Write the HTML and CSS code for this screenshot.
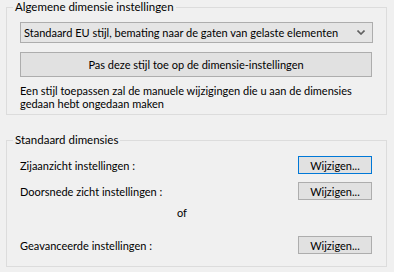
FILE: index.html
```html
<!DOCTYPE html>
<html lang="nl">
<head>
    <meta charset="UTF-8">
    <title>Dimensie-instellingen</title>
    <link rel="stylesheet" href="styles.css">
</head>
<body>
    <fieldset class="group">
        <legend>Algemene dimensie instellingen</legend>
        <div class="group-body">
            <div class="combo">
                <span>Standaard EU stijl, bemating naar de gaten van gelaste elementen</span>
                <svg class="chevron" width="8" height="5" viewBox="0 0 8 5">
                    <path d="M0.5 0.5 L4 4 L7.5 0.5" fill="none" stroke="#606060" stroke-width="1.6"/>
                </svg>
            </div>
            <button class="wide-btn">Pas deze stijl toe op de dimensie-instellingen</button>
            <p class="note">Een stijl toepassen zal de manuele wijzigingen die u aan de dimensies gedaan hebt ongedaan maken</p>
        </div>
    </fieldset>

    <fieldset class="group second">
        <legend>Standaard dimensies</legend>
        <div class="group-body rows">
            <div class="row">
                <span>Zijaanzicht instellingen :</span>
                <button class="small-btn focused">Wijzigen...</button>
            </div>
            <div class="row">
                <span>Doorsnede zicht instellingen :</span>
                <button class="small-btn">Wijzigen...</button>
            </div>
            <div class="or">of</div>
            <div class="row">
                <span>Geavanceerde instellingen :</span>
                <button class="small-btn">Wijzigen...</button>
            </div>
        </div>
    </fieldset>
</body>
</html>
```

FILE: styles.css
```css
body {
    margin: 0;
    background-color: #f0f0f0;
    font-family: Lato, "Liberation Sans", sans-serif;
    font-size: 11px;
    color: #000;
}
.group {
    box-sizing: border-box;
    width: 381px;
    margin: 0 0 0 6px;
    padding: 0;
    border: 1px solid #dcdcdc;
}
.group legend {
    margin-left: 6px;
    padding: 0 2px;
    line-height: 14px;
    font-size: 11.5px;
}
.group-body {
    padding: 8px 13px 4px 13px;
}
.combo {
    display: flex;
    align-items: center;
    justify-content: space-between;
    height: 21px;
    box-sizing: border-box;
    padding: 0 7px 0 3px;
    border: 1px solid #adadad;
    background-color: #e5e5e5;
    white-space: nowrap;
}
.wide-btn, .small-btn {
    font-family: inherit;
    font-size: 11px;
    color: #000;
    background-color: #e1e1e1;
    border: 1px solid #adadad;
    padding: 0;
    cursor: pointer;
}
.wide-btn {
    display: block;
    width: 352px;
    height: 25px;
    margin-top: 9px;
}
.note {
    margin: 7px 0 0 0;
    line-height: 13px;
}
.second {
    margin-top: 18px;
}
.rows {
    padding: 9px 14px 12px 13px;
}
.row {
    display: flex;
    align-items: center;
    justify-content: space-between;
    height: 18px;
}
.row + .row {
    margin-top: 8px;
}
.small-btn {
    width: 74px;
    height: 18px;
}
.focused {
    border-color: #0078d7;
}
.or {
    margin: 6px 0 16px 157px;
    line-height: 14px;
}
```
